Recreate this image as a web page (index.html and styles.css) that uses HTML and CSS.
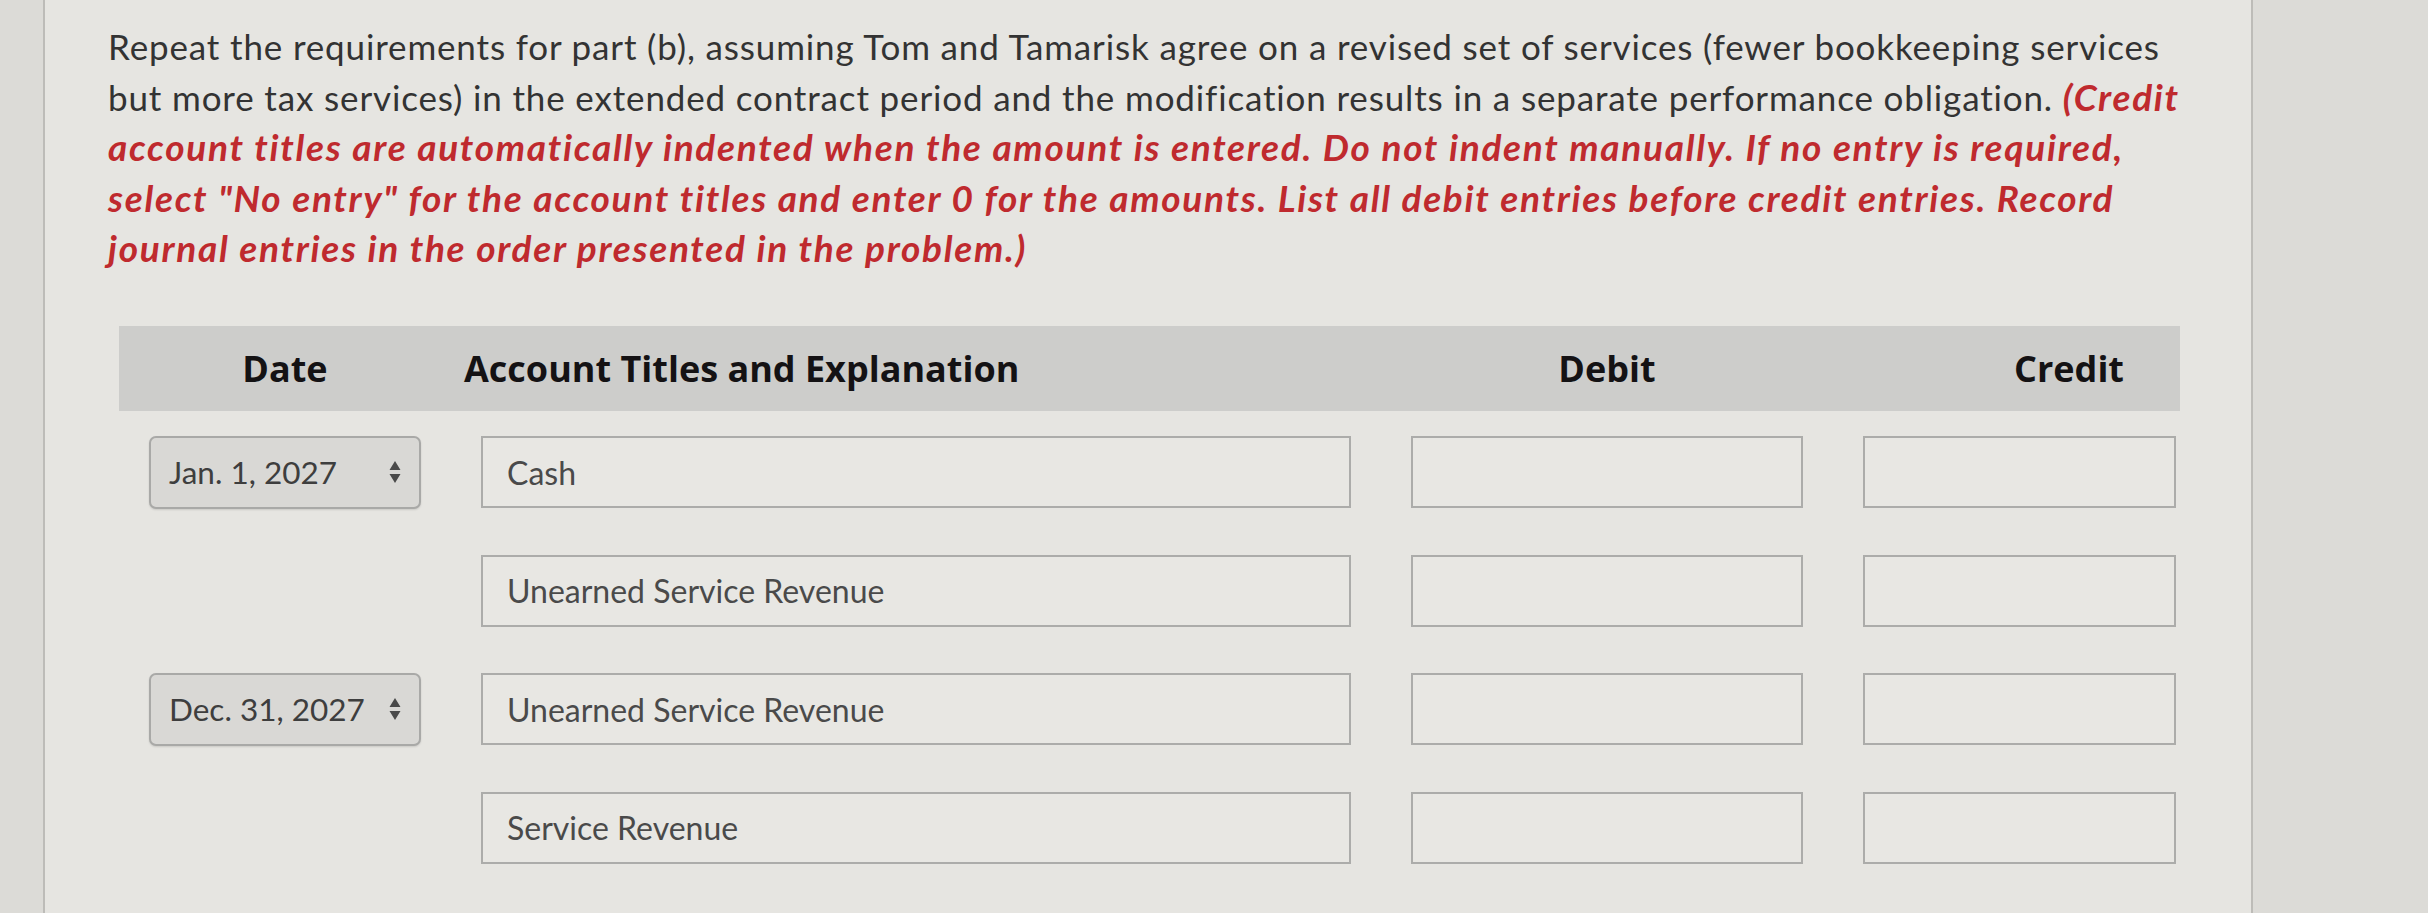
FILE: index.html
```html
<!DOCTYPE html>
<html>
<head>
    <title>Journal entry</title>
    <link rel="stylesheet" href="styles.css">
</head>
<body>
    <div class="panel">
        <p class="question">Repeat the requirements for part (b), assuming Tom and Tamarisk agree on a revised set of services (fewer bookkeeping services but more tax services) in the extended contract period and the modification results in a separate performance obligation. <span class="hint">(Credit account titles are automatically indented when the amount is entered. Do not indent manually. If no entry is required, select "No entry" for the account titles and enter 0 for the amounts. List all debit entries before credit entries. Record journal entries in the order presented in the problem.)</span></p>

        <div class="journal">
            <div class="row head">
                <div class="h-date">Date</div>
                <div class="h-account">Account Titles and Explanation</div>
                <div class="h-debit">Debit</div>
                <div class="h-credit">Credit</div>
            </div>

            <div class="row">
                <div class="date-select">
                    <span>Jan. 1, 2027</span>
                    <svg class="arrows" width="12" height="24" viewBox="0 0 12 24"><path d="M6 1 L11.5 10 L0.5 10 Z M6 23 L11.5 14 L0.5 14 Z" fill="#4a4a4a"/></svg>
                </div>
                <div class="field">Cash</div>
                <div class="field"></div>
                <div class="field"></div>
            </div>

            <div class="row">
                <div></div>
                <div class="field">Unearned Service Revenue</div>
                <div class="field"></div>
                <div class="field"></div>
            </div>

            <div class="row">
                <div class="date-select">
                    <span>Dec. 31, 2027</span>
                    <svg class="arrows" width="12" height="24" viewBox="0 0 12 24"><path d="M6 1 L11.5 10 L0.5 10 Z M6 23 L11.5 14 L0.5 14 Z" fill="#4a4a4a"/></svg>
                </div>
                <div class="field">Unearned Service Revenue</div>
                <div class="field"></div>
                <div class="field"></div>
            </div>

            <div class="row">
                <div></div>
                <div class="field">Service Revenue</div>
                <div class="field"></div>
                <div class="field"></div>
            </div>
        </div>
    </div>
</body>
</html>
```

FILE: styles.css
```css
body {
    margin: 0;
    background-color: #dcdbd7;
    font-family: 'Lato', sans-serif;
    color: #2e2e2e;
}

.panel {
    margin-left: 43px;
    width: 2210px;
    min-height: 913px;
    box-sizing: border-box;
    background-color: #e6e5e1;
    border-left: 2px solid #bdbcb8;
    border-right: 2px solid #bdbcb8;
    padding: 21px 0 0 63px;
}

.question {
    margin: 0;
    width: 2090px;
    font-size: 35px;
    letter-spacing: 0.85px;
    line-height: 50.5px;
    color: #333;
}

.hint {
    color: #bf2a2e;
    font-style: italic;
    font-weight: 700;
    font-size: 37px;
    letter-spacing: 1.7px;
}

.journal {
    margin-top: 52px;
    margin-left: 11px;
    width: 2061px;
}

.row {
    display: grid;
    grid-template-columns: 272px 870px 392px 313px;
    column-gap: 60px;
    padding-left: 30px;
    margin-bottom: 46px;
    align-items: center;
}

.row.head {
    background-color: #cdcdcb;
    height: 85px;
    margin-bottom: 25px;
    font-family: 'Open Sans', sans-serif;
    font-weight: 700;
    font-size: 36px;
    color: #141214;
}

.h-date, .h-debit {
    text-align: center;
}

.h-account {
    margin-left: -17px;
}

.h-credit {
    text-align: right;
    padding-right: 52px;
}

.date-select {
    height: 73px;
    box-sizing: border-box;
    border: 2px solid #a9a9a7;
    border-radius: 7px;
    background-color: #d9d8d5;
    box-shadow: 0 1px 2px rgba(0, 0, 0, 0.12);
    display: flex;
    align-items: center;
    justify-content: space-between;
    padding: 0 18px 0 18px;
    font-size: 31.5px;
    color: #3e3e3e;
}

.field {
    height: 72px;
    box-sizing: border-box;
    border: 2px solid #acacaa;
    background-color: #e8e7e3;
    display: flex;
    align-items: center;
    padding-left: 24px;
    font-size: 32px;
    color: #4a4a4a;
}
```
